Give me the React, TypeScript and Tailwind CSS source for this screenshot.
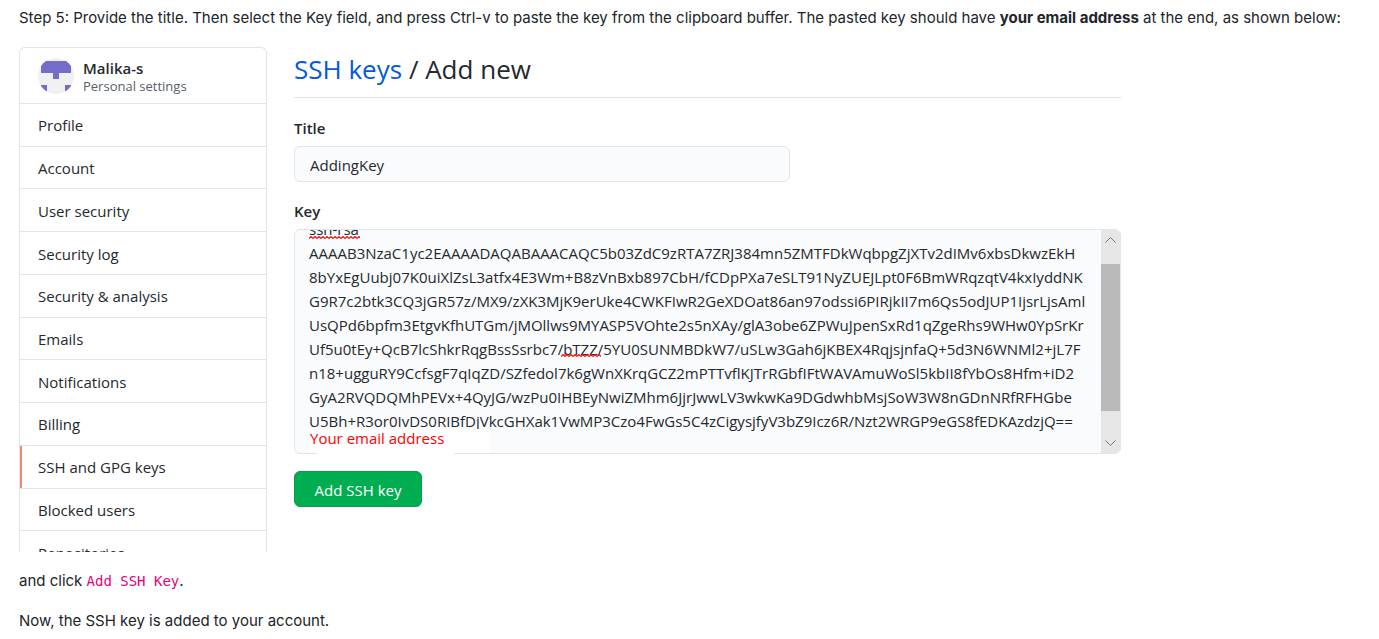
import { useLayoutEffect, useRef } from "react";

const menu = [
  "Profile",
  "Account",
  "User security",
  "Security log",
  "Security & analysis",
  "Emails",
  "Notifications",
  "Billing",
  "SSH and GPG keys",
  "Blocked users",
  "Repositories",
];

const keyLines = [
  "ssh-rsa",
  "AAAAB3NzaC1yc2EAAAADAQABAAACAQC5b03ZdC9zRTA7ZRJ384mn5ZMTFDkWqbpgZjXTv2dIMv6xbsDkwzEkH",
  "8bYxEgUubj07K0uiXlZsL3atfx4E3Wm+B8zVnBxb897CbH/fCDpPXa7eSLT91NyZUEJLpt0F6BmWRqzqtV4kxIyddNK",
  "G9R7c2btk3CQ3jGR57z/MX9/zXK3MjK9erUke4CWKFIwR2GeXDOat86an97odssi6PIRjkII7m6Qs5odJUP1IjsrLjsAml",
  "UsQPd6bpfm3EtgvKfhUTGm/jMOllws9MYASP5VOhte2s5nXAy/glA3obe6ZPWuJpenSxRd1qZgeRhs9WHw0YpSrKr",
  "Uf5u0tEy+QcB7lcShkrRqgBssSsrbc7/bTZZ/5YU0SUNMBDkW7/uSLw3Gah6jKBEX4RqjsjnfaQ+5d3N6WNMl2+jL7F",
  "n18+ugguRY9CcfsgF7qIqZD/SZfedol7k6gWnXKrqGCZ2mPTTvflKJTrRGbfIFtWAVAmuWoSl5kbII8fYbOs8Hfm+iD2",
  "GyA2RVQDQMhPEVx+4QyJG/wzPu0IHBEyNwiZMhm6JjrJwwLV3wkwKa9DGdwhbMsjSoW3W8nGDnNRfRFHGbe",
  "U5Bh+R3or0IvDS0RIBfDjVkcGHXak1VwMP3Czo4FwGs5C4zCigysjfyV3bZ9Icz6R/Nzt2WRGP9eGS8fEDKAzdzjQ==",
];

function Avatar() {
  return (
    <svg className="size-9 shrink-0" viewBox="0 0 36 36" aria-hidden="true">
      <defs>
        <clipPath id="round">
          <circle cx="18" cy="18" r="18" />
        </clipPath>
      </defs>
      <g clipPath="url(#round)">
        <path fill="#f0f0f0" d="M0 0h36v36H0z" />
        <path fill="#766ccb" d="M3 3h30v12H21v6h-6v-6H3zM3 27h6v6H3zM27 27h6v6h-6z" />
      </g>
    </svg>
  );
}

function Squiggle({ className }: { className: string }) {
  return (
    <svg className={"absolute h-[3px] " + className} aria-hidden="true">
      <defs>
        <pattern id="wave" width="4" height="3" patternUnits="userSpaceOnUse">
          <path d="M0 2.5L2 .5L4 2.5" fill="none" stroke="#f00" strokeWidth="1.1" />
        </pattern>
      </defs>
      <rect width="100%" height="3" fill="url(#wave)" />
    </svg>
  );
}

function Sidebar() {
  return (
    <nav className="h-[505px] w-[248px] shrink-0 overflow-hidden rounded-t-md border border-b-0 border-[#e1e4e8]">
      <div className="flex h-[55px] items-center gap-[9px] px-[18px] pt-px">
        <Avatar />
        <div className="pt-[2px]">
          <div className="text-[15px] leading-[18px] font-semibold">Malika-s</div>
          <div className="text-[13px] leading-[18px] text-[#586069]">Personal settings</div>
        </div>
      </div>
      <ul className="grid h-[470px] auto-rows-fr">
        {menu.map((item) => (
          <li key={item} className="flex border-t border-[#e1e4e8]">
            <a
              href="#"
              className={
                item === "SSH and GPG keys"
                  ? "flex flex-1 items-center border-l-2 border-[#f9826c] pt-px pl-4"
                  : "flex flex-1 items-center pt-px pl-[18px]"
              }
            >
              {item}
            </a>
          </li>
        ))}
      </ul>
    </nav>
  );
}

function KeyField() {
  const area = useRef<HTMLTextAreaElement>(null);
  useLayoutEffect(() => {
    if (area.current) area.current.scrollTop = 19;
  }, []);
  return (
    <div className="relative mt-[6px]">
      <div className="flex h-[225px] overflow-hidden rounded-md border border-[#e1e4e8] bg-[#fafbfc]">
        <textarea
          id="key"
          ref={area}
          wrap="off"
          spellCheck={false}
          defaultValue={keyLines.join("\n")}
          className="h-full min-w-0 flex-1 resize-none overflow-hidden pt-[6px] pb-10 pl-[14px] text-[15px] leading-6 outline-none"
        />
        <div className="flex w-[19px] flex-col bg-[#e6e6e6] text-[#777]">
          <svg className="h-[34px] w-full" viewBox="0 0 19 34" fill="none" stroke="currentColor" aria-hidden="true">
            <path d="M4.500 12.500L9.500 7.500L14.500 12.500" />
          </svg>
          <div className="h-[147px] bg-[#b9b9b9]" />
          <svg className="flex-1" viewBox="0 0 19 42" fill="none" stroke="currentColor" aria-hidden="true">
            <path d="M4.500 29.500L9.500 34.500L14.500 29.500" />
          </svg>
        </div>
      </div>
      <Squiggle className="top-[7px] left-[15px] w-[51px]" />
      <Squiggle className="top-[125px] left-[267px] w-[40px]" />
      <div className="absolute bottom-px left-4 h-[24px] w-[180px] bg-white" />
      <div className="absolute bottom-0 left-[23px] h-px w-[137px] bg-white" />
      <div className="absolute bottom-1 left-4 text-[15px] leading-6 text-[#ff0000]">Your email address</div>
    </div>
  );
}

export default function App() {
  return (
    <main className="bg-white px-[19px] font-['Inter',sans-serif] text-[15px] leading-6 text-[#212529]">
      <p className="pt-[6px]">
        Step 5: Provide the title. Then select the Key field, and press Ctrl-v to paste the key from the clipboard
        buffer. The pasted key should have <strong className="font-bold">your email address</strong> at the end, as
        shown below:
      </p>

      <div className="mt-[17px] flex gap-[27px] font-['Open_Sans','Noto_Sans',sans-serif] text-[#24292e]">
        <Sidebar />
        <section className="max-w-[827px] min-w-0 flex-1">
          <h1 className="border-b border-[#e1e4e8] pt-1 pb-[10px] text-[26px] leading-9">
            <a href="#" className="text-[#0459dc]">
              SSH keys
            </a>{" "}
            / Add new
          </h1>
          <form onSubmit={(e) => e.preventDefault()}>
            <label htmlFor="title" className="mt-[18px] block font-semibold">
              Title
            </label>
            <input
              id="title"
              type="text"
              defaultValue="AddingKey"
              className="mt-[6px] block h-9 w-3/5 rounded-md border border-[#e1e4e8] bg-[#fafbfc] px-[15px] pt-[2px] outline-none"
            />
            <label htmlFor="key" className="mt-[17px] block font-semibold">
              Key
            </label>
            <KeyField />
            <button
              type="submit"
              className="mt-[17px] h-9 w-32 rounded-md border border-[#0d9c4b] bg-[#00ad50] pt-[2px] text-white"
            >
              Add SSH key
            </button>
          </form>
        </section>
      </div>

      <p className="mt-[17px]">
        and click{" "}
        <code className="font-['DejaVu_Sans_Mono',monospace] text-[14px] leading-none text-[#e6007a]">Add SSH Key</code>.
      </p>
      <p className="mt-4">Now, the SSH key is added to your account.</p>
    </main>
  );
}
